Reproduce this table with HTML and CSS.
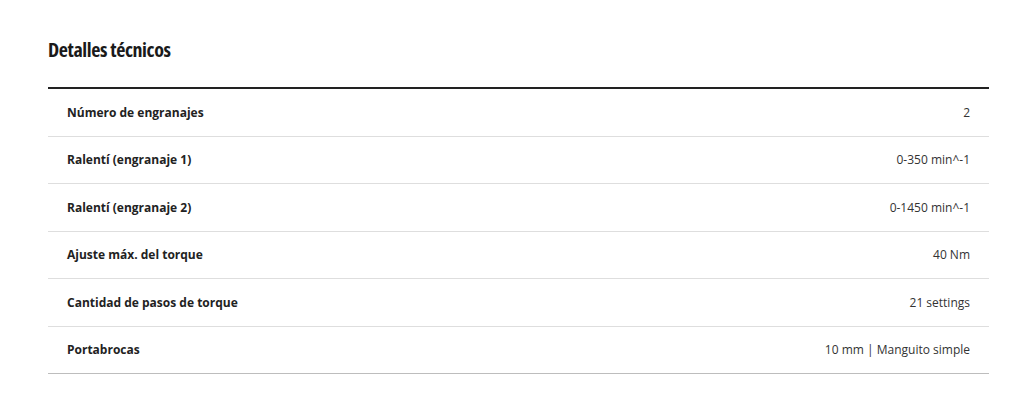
FILE: index.html
```html
<!DOCTYPE html>
<html lang="es">
<head>
<meta charset="utf-8">
<title>Detalles técnicos</title>
<link rel="stylesheet" href="styles.css">
</head>
<body>
<section class="specs">
  <h2 class="specs-title">Detalles técnicos</h2>
  <div class="specs-table">
    <div class="row"><span class="label">Número de engranajes</span><span class="value">2</span></div>
    <div class="row"><span class="label">Ralentí (engranaje 1)</span><span class="value">0-350 min^-1</span></div>
    <div class="row"><span class="label">Ralentí (engranaje 2)</span><span class="value">0-1450 min^-1</span></div>
    <div class="row"><span class="label">Ajuste máx. del torque</span><span class="value">40 Nm</span></div>
    <div class="row"><span class="label">Cantidad de pasos de torque</span><span class="value">21 settings</span></div>
    <div class="row last"><span class="label">Portabrocas</span><span class="value">10 mm | Manguito simple</span></div>
  </div>
</section>
</body>
</html>
```

FILE: styles.css
```css
html, body {
  margin: 0;
  padding: 0;
  background: #ffffff;
}
body {
  font-family: "Open Sans", "Noto Sans", sans-serif;
  color: #222;
}
.specs {
  padding: 38px 35px 0 48px;
}
.specs-title {
  margin: 0 0 25px 0;
  font-family: "Open Sans", sans-serif;
  font-stretch: 75%;
  font-weight: 700;
  font-size: 20px;
  line-height: 24px;
  color: #1a1a1a;
  letter-spacing: -0.4px;
}
.specs-table {
  border-top: 2px solid #222;
}
.row {
  display: flex;
  justify-content: space-between;
  align-items: center;
  height: 46.5px;
  padding: 0 19px;
  border-bottom: 1px solid #dedede;
  font-size: 12px;
}
.row.last {
  border-bottom: 1px solid #bdbdbd;
}
.label {
  font-weight: 700;
  color: #222;
}
.value {
  color: #333;
}
```
